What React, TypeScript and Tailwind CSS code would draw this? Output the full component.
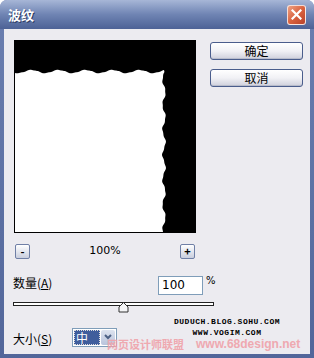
import React from 'react';

const wavePath = () => {
  const pts: string[] = [];
  for (let x = 1; x <= 150; x += 1) {
    const y = 31.5 + 1.6 * Math.sin((x / 27) * Math.PI * 2 + 0.6) + 0.3 * Math.sin((x / 9) * Math.PI * 2);
    pts.push(`${x},${y.toFixed(2)}`);
  }
  for (let y = 32; y <= 192; y += 1) {
    const x = 150 + 1.6 * Math.sin((y / 25) * Math.PI * 2 + 1) + 0.4 * Math.sin((y / 9) * Math.PI * 2);
    pts.push(`${x.toFixed(2)},${y}`);
  }
  pts.push('1,192');
  return 'M' + pts.join(' L') + ' Z';
};

const XpButton = ({ label }: { label: string }) => (
  <button className="w-[93px] h-[18px] rounded-[3px] border border-[#4a5d8c] bg-gradient-to-b from-white via-[#f1f1f5] to-[#cfd0dc] text-[12px] leading-none text-black shadow-[inset_0_-1px_0_#b8bccb]">
    {label}
  </button>
);

const ZoomButton = ({ sign }: { sign: string }) => (
  <div className="w-[15px] h-[15px] rounded-[2px] border border-[#6f7fa6] bg-gradient-to-b from-white to-[#c9cede] flex items-center justify-center text-[11px] leading-none text-black font-bold">
    {sign}
  </div>
);

export default function App() {
  return (
    <div
      className="w-[314px] h-[358px] bg-gradient-to-b from-[#6b7fb0] to-[#52669a] rounded-t-[7px] flex flex-col overflow-hidden"
      style={{ fontFamily: '"Noto Sans CJK SC", "DejaVu Sans", sans-serif' }}
    >
      {/* Title bar */}
      <div className="h-[29px] shrink-0 flex items-center justify-between pl-[8px] pr-[8px] bg-gradient-to-b from-[#a7b6d7] via-[#6f84b3] to-[#4d6296]">
        <span className="text-white font-bold text-[13px] leading-none [text-shadow:1px_1px_0_#2c3b63]">波纹</span>
        <div className="w-[19px] h-[20px] rounded-[3px] border border-white/80 bg-gradient-to-br from-[#eda183] via-[#d9623f] to-[#b9422a] flex items-center justify-center">
          <svg width="11" height="11" viewBox="0 0 11 11">
            <path d="M1.5 1.5 L9.5 9.5 M9.5 1.5 L1.5 9.5" stroke="white" strokeWidth="2.2" strokeLinecap="square" />
          </svg>
        </div>
      </div>

      {/* Body */}
      <div className="relative flex-1 mx-[4px] mb-[4px] bg-[#ecebf0] pt-[11px] pl-[10px]">
        <div className="flex">
          <svg width="182" height="193" viewBox="0 0 182 193" className="block">
            <rect x="0" y="0" width="182" height="193" fill="#000" />
            <path d={wavePath()} fill="#fff" />
          </svg>
          <div className="ml-[14px] mt-[2px] flex flex-col gap-[9px]">
            <XpButton label="确定" />
            <XpButton label="取消" />
          </div>
        </div>

        <div className="mt-[10px] w-[182px] flex items-center justify-between pl-[1px] pr-[1px]">
          <ZoomButton sign="-" />
          <span className="text-[11px] text-black" style={{ fontFamily: '"DejaVu Sans", sans-serif' }}>100%</span>
          <ZoomButton sign="+" />
        </div>

        <div className="mt-[16px] flex items-start -ml-[1px]">
          <span className="w-[145px] pt-0 text-[12px] leading-[14px] text-black">
            数量(<span className="underline">A</span>)
          </span>
          <div className="w-[45px] h-[19px] border border-[#7f9db9] bg-white flex items-center pl-[3px] text-[12px] leading-none text-black" style={{ fontFamily: '"DejaVu Sans", sans-serif' }}>
            100
          </div>
          <span className="ml-[3px] text-[10px] leading-none text-black" style={{ fontFamily: '"DejaVu Sans", sans-serif' }}>%</span>
        </div>

        <div className="relative mt-[7px] -ml-[1px] w-[201px] h-[11px]">
          <div className="h-[4px] border border-[#222] bg-white" />
          <svg width="11" height="11" viewBox="0 0 11 11" className="absolute left-[105px] top-0">
            <path d="M5.5 0.5 L10 5 L10 10 L1 10 L1 5 Z" fill="#f4f4f6" stroke="#333" strokeWidth="1" />
          </svg>
        </div>

        <div className="mt-[15px] -ml-[1px] flex items-center">
          <span className="w-[59px] pt-[3px] text-[12px] leading-none text-black">
            大小(<span className="underline">S</span>)
          </span>
          <div className="w-[45px] h-[19px] border border-[#7f9db9] bg-white flex">
            <div className="m-[1px] w-[26px] bg-[#3f5d9c] outline outline-1 outline-dotted outline-[#ddd] -outline-offset-1 text-white text-[12px] leading-[15px] pl-[2px]">
              中
            </div>
            <div className="flex-1 my-[1px] mr-[1px] rounded-[2px] bg-gradient-to-b from-[#dde3ef] to-[#b9c4dc] flex items-center justify-center">
              <svg width="8" height="6" viewBox="0 0 8 6">
                <path d="M1 1 L4 4 L7 1" stroke="#4d6185" strokeWidth="2" fill="none" />
              </svg>
            </div>
          </div>
        </div>

        {/* Watermarks */}
        <div className="absolute left-[168px] top-[287px] w-[110px] flex flex-col items-center text-[8px] leading-[11px] font-bold text-black tracking-[0.5px]" style={{ fontFamily: '"Liberation Mono", monospace' }}>
          <span>DUDUCH.BLOG.SOHU.COM</span>
          <span>WWW.VOGIM.COM</span>
        </div>
        <div className="absolute left-[103px] top-[309px] flex items-center gap-[12px] text-[#f0a2aa] font-bold text-[11px] leading-none opacity-90 whitespace-nowrap">
          <span>网页设计师联盟</span>
          <span className="text-[12px]" style={{ fontFamily: '"Liberation Sans", sans-serif' }}>www.68design.net</span>
        </div>
      </div>
    </div>
  );
}
